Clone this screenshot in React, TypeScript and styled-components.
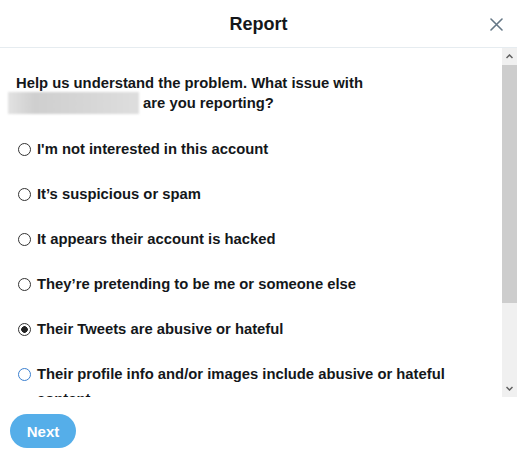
import React, { useState } from 'react';
import styled, { createGlobalStyle } from 'styled-components';

const GlobalStyle = createGlobalStyle`
  html, body {
    margin: 0;
    padding: 0;
    background: #fff;
  }
  body {
    font-family: "Liberation Sans", Arial, sans-serif;
    color: #14171a;
  }
`;

const reasons = [
  "I'm not interested in this account",
  'It\u2019s suspicious or spam',
  'It appears their account is hacked',
  'They\u2019re pretending to be me or someone else',
  'Their Tweets are abusive or hateful',
  'Their profile info and/or images include abusive or hateful content',
];

const App: React.FC = () => {
  const [selected, setSelected] = useState(4);
  const focused = 5;

  return (
    <>
      <GlobalStyle />
      <Dialog>
        <Header>
          <Title>Report</Title>
          <CloseButton aria-label="Close">
            <svg width="13" height="13" viewBox="0 0 13 13">
              <path d="M1 1 L12 12 M12 1 L1 12" stroke="#657786" strokeWidth="1.6" strokeLinecap="round" />
            </svg>
          </CloseButton>
        </Header>
        <Body>
          <Content>
            <Question>
              Help us understand the problem. What issue with
              <br />
              <Blurred /> are you reporting?
            </Question>
            <OptionList>
              {reasons.map((reason, i) => (
                <Option key={reason} onClick={() => setSelected(i)}>
                  <Radio $checked={selected === i} $focus={focused === i && selected !== i} />
                  <Label>{reason}</Label>
                </Option>
              ))}
            </OptionList>
          </Content>
          <Scrollbar>
            <ScrollButton>
              <svg width="7" height="5" viewBox="0 0 7 5">
                <path d="M0.5 4 L3.5 1 L6.5 4" stroke="#606060" strokeWidth="1.5" fill="none" />
              </svg>
            </ScrollButton>
            <Thumb />
            <Track />
            <ScrollButton>
              <svg width="7" height="5" viewBox="0 0 7 5">
                <path d="M0.5 1 L3.5 4 L6.5 1" stroke="#606060" strokeWidth="1.5" fill="none" />
              </svg>
            </ScrollButton>
          </Scrollbar>
        </Body>
        <Footer>
          <NextButton>Next</NextButton>
        </Footer>
      </Dialog>
    </>
  );
};

const Dialog = styled.div`
  width: 517px;
  height: 456px;
  background: #fff;
  display: flex;
  flex-direction: column;
  overflow: hidden;
`;

const Header = styled.div`
  height: 45px;
  padding-top: 2px;
  flex: 0 0 auto;
  border-bottom: 1px solid #e6ecf0;
  display: flex;
  align-items: center;
  justify-content: center;
  position: relative;
`;

const Title = styled.h2`
  margin: 0;
  font-size: 18px;
  font-weight: 700;
  color: #14171a;
`;

const CloseButton = styled.button`
  position: absolute;
  right: 14px;
  top: 18px;
  width: 13px;
  height: 13px;
  padding: 0;
  border: none;
  background: none;
  display: flex;
  cursor: pointer;
`;

const Body = styled.div`
  height: 349px;
  flex: 0 0 auto;
  display: flex;
`;

const Content = styled.div`
  flex: 1;
  overflow: hidden;
  padding: 26px 16px 0 16px;
`;

const Question = styled.p`
  margin: 0;
  font-size: 14.8px;
  font-weight: 700;
  line-height: 18px;
`;

const Blurred = styled.span`
  display: inline-block;
  width: 131px;
  height: 22px;
  margin-left: -8px;
  vertical-align: -6px;
  background: linear-gradient(90deg, #e2e2e2 0%, #cfcfcf 20%, #d6d6d6 60%, #dedede 100%);
  filter: blur(1px);
`;

const OptionList = styled.div`
  margin-top: 13px;
  display: flex;
  flex-direction: column;
`;

const Option = styled.label`
  display: flex;
  align-items: flex-start;
  gap: 6px;
  padding: 10px 0;
  margin-left: 2px;
  cursor: pointer;
`;

const Radio = styled.span<{ $checked: boolean; $focus: boolean }>`
  flex: 0 0 auto;
  width: 11px;
  height: 11px;
  margin-top: 6px;
  border-radius: 50%;
  border: 1px solid ${(p) => (p.$focus ? '#3b7fcf' : '#333')};
  background: ${(p) => (p.$checked ? 'radial-gradient(circle, #222 0 3px, #fff 3.6px)' : '#fff')};
`;

const Label = styled.span`
  font-size: 14.8px;
  font-weight: 700;
  line-height: 25px;
  color: #14171a;
`;

const Scrollbar = styled.div`
  width: 15px;
  flex: 0 0 auto;
  display: flex;
  flex-direction: column;
  background: #f0f0f0;
`;

const ScrollButton = styled.div`
  height: 17px;
  flex: 0 0 auto;
  display: flex;
  align-items: center;
  justify-content: center;
  background: #f0f0f0;
`;

const Thumb = styled.div`
  height: 238px;
  flex: 0 0 auto;
  background: #cdcdcd;
`;

const Track = styled.div`
  flex: 1;
  background: #f0f0f0;
`;

const Footer = styled.div`
  flex: 1;
  padding: 17px 10px 0;
`;

const NextButton = styled.button`
  height: 34px;
  width: 66px;
  border: none;
  border-radius: 17px;
  background: #55aee9;
  color: #fff;
  font-family: "Liberation Sans", Arial, sans-serif;
  font-size: 15px;
  font-weight: 700;
  padding: 0;
  cursor: pointer;
`;

export default App;
